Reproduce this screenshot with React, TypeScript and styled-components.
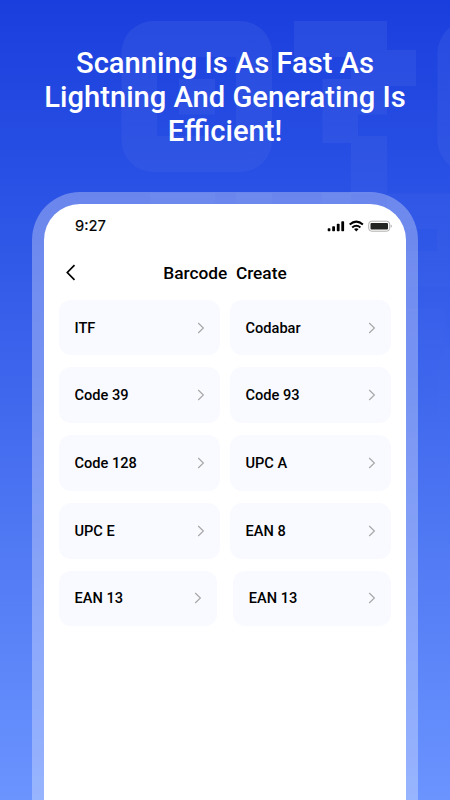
import React from 'react';
import styled, { createGlobalStyle } from 'styled-components';

const GlobalStyle = createGlobalStyle`
  * { box-sizing: border-box; }
  body { margin: 0; font-family: Roboto, sans-serif; }
`;

const Page = styled.main`
  position: relative;
  width: 450px;
  height: 800px;
  overflow: hidden;
  display: flex;
  flex-direction: column;
  align-items: center;
  background: linear-gradient(180deg, #1a3edd 0%, #2a52e5 24%, #3e66ed 48%, #5079f4 68%, #6b94ff 100%);
`;

const Pattern = styled.svg`
  position: absolute;
  inset: 0;
`;

const Headline = styled.h1`
  position: relative;
  flex: none;
  width: 400px;
  height: 192px;
  margin: 0;
  padding-top: 46px;
  color: #fff;
  font-size: 29.15px;
  line-height: 34px;
  font-weight: 500;
  text-align: center;
  white-space: pre-line;
`;

const Phone = styled.section`
  position: relative;
  flex: none;
  width: 386px;
  height: 660px;
  padding: 12px;
  border-radius: 48px;
  background: rgba(255, 255, 255, 0.3);
`;

const Screen = styled.div`
  height: 100%;
  padding: 0 15px;
  border-radius: 36px;
  background: #fff;
  color: #000;
`;

const StatusBar = styled.div`
  display: flex;
  justify-content: space-between;
  height: 44px;
  padding: 12px 0 0 16px;
`;

const Time = styled.span`
  font: 400 14.8px/20px Inter, sans-serif;
  -webkit-text-stroke: 0.2px #000;
`;

const StatusIcons = styled.svg`
  margin: 2px -1px 0 0;
`;

const TitleBar = styled.header`
  display: grid;
  grid-template-columns: 24px 1fr 24px;
  align-items: center;
  height: 51.8px;
  padding-bottom: 3px;
`;

const Title = styled.h2`
  margin: 0;
  padding-top: 1px;
  text-align: center;
  font-size: 17.3px;
  font-weight: 500;
  white-space: pre;
`;

const BackIcon = styled.svg`
  margin: -1px 0 0 5px;
`;

const List = styled.div`
  display: flex;
  flex-direction: column;
  gap: 12px;
`;

const Row = styled.div<{ $gap: number }>`
  display: grid;
  grid-template-columns: 1fr 1fr;
  gap: ${({ $gap }) => $gap}px;
`;

const Card = styled.div`
  display: flex;
  align-items: center;
  justify-content: space-between;
  height: 55.7px;
  padding: 0 15px 0 15.5px;
  border-radius: 12px;
  background: #f9faff;
  font-size: 14.6px;
  line-height: 20px;
  font-weight: 500;
`;

const rows = [
  ['ITF', 'Codabar'],
  ['Code 39', 'Code 93'],
  ['Code 128', 'UPC A'],
  ['UPC E', 'EAN 8'],
  ['EAN 13', 'EAN 13'],
];

function Chevron() {
  return (
    <svg width="8" height="12" viewBox="0 0 8 12" fill="none" stroke="#a6a6a6" strokeWidth="1.15">
      <path d="M1.200 1 6.400 6 1.200 11" />
    </svg>
  );
}

function QrPattern() {
  return (
    <Pattern width="450" height="800" viewBox="0 0 450 800">
      <defs>
        <linearGradient id="fade" gradientUnits="userSpaceOnUse" x1="0" y1="0" x2="0" y2="400">
          <stop offset="0" stopColor="#fff" stopOpacity=".06" />
          <stop offset=".4" stopColor="#fff" stopOpacity=".036" />
          <stop offset=".55" stopColor="#fff" stopOpacity=".02" />
          <stop offset=".75" stopColor="#fff" stopOpacity=".01" />
          <stop offset="1" stopColor="#fff" stopOpacity=".004" />
        </linearGradient>
      </defs>
      <g fill="url(#fade)" fillRule="evenodd">
        <path d="M153.500 21H240a32 32 0 0 1 32 32V140a32 32 0 0 1-32 32H153.500a32 32 0 0 1-32-32V53a32 32 0 0 1 32-32ZM157 57V136H236V57Z" />
        <path d="M179 79H215V114.500H179Z" />
        <path d="M294 21H387V50H416V86H387V114.500H358V136H387V193.500H450V286.500H387V251H437V229H387V193.500H351V143H322.500V79H351V57H294Z" />
        <path d="M469.500 21H560V172H469.500a32 32 0 0 1-32-32V53a32 32 0 0 1 32-32Z" />
        <path d="M150 193H215V229H150ZM236 193H272V229H236ZM322 193H351V229H322Z" />
        <path d="M380 308.500H444.500V344.500H380ZM469.500 338a32 32 0 0 0-32 32V420H480V338Z" />
      </g>
    </Pattern>
  );
}

export default function App() {
  return (
    <>
      <GlobalStyle />
      <Page>
        <QrPattern />
        <Headline>{'Scanning Is As Fast As\nLightning And Generating Is\nEfficient!'}</Headline>
        <Phone>
          <Screen>
            <StatusBar>
              <Time>9:27</Time>
              <StatusIcons width="65" height="16" viewBox="327 218 65 16">
                <g>
                  <rect x="327.700" y="228.200" width="2.700" height="3" rx=".7" />
                  <rect x="332.200" y="226.200" width="2.800" height="5" rx=".7" />
                  <rect x="336.800" y="223.700" width="2.800" height="7.500" rx=".7" />
                  <rect x="341.300" y="221.200" width="2.800" height="10" rx=".7" />
                </g>
                <g fill="none" stroke="#000" strokeWidth="2">
                  <path d="M349.700 224.500Q356.300 218.800 362.900 224.500" />
                  <path d="M352.200 227.500Q356.300 224 360.400 227.500" />
                </g>
                <path d="M354 229.100Q356.300 227.500 358.600 229.100L356.300 231.400Z" />
                <rect x="368.700" y="221.200" width="21" height="10" rx="3" fill="none" stroke="#b0b0ae" />
                <rect x="370.500" y="222.900" width="17.500" height="6.600" rx="1" fill="#242624" />
                <path d="M390.800 224.600Q392.700 226.200 390.800 227.800Z" fill="#999" />
              </StatusIcons>
            </StatusBar>
            <TitleBar>
              <BackIcon width="12" height="18" viewBox="0 0 12 18" fill="none" stroke="#000" strokeWidth="1.7">
                <path d="M10.500 2.200 3.300 9.500 10.500 16.800" />
              </BackIcon>
              <Title>{'Barcode  Create'}</Title>
            </TitleBar>
            <List>
              {rows.map((row, i) => (
                <Row key={i} $gap={i === rows.length - 1 ? 16.5 : 10}>
                  {row.map((label, j) => (
                    <Card key={j}>
                      {label}
                      <Chevron />
                    </Card>
                  ))}
                </Row>
              ))}
            </List>
          </Screen>
        </Phone>
      </Page>
    </>
  );
}
